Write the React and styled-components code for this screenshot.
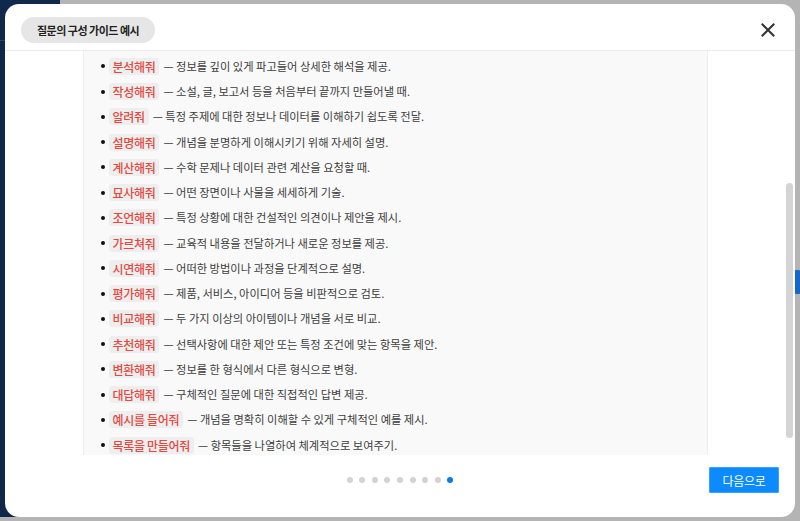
import React, { useLayoutEffect, useRef, useState } from 'react';
import styled, { createGlobalStyle } from 'styled-components';

const GlobalStyle = createGlobalStyle`
  html, body { margin: 0; padding: 0; height: 100%; }
  body {
    font-family: "Noto Sans CJK KR", "Noto Sans", sans-serif;
    background: #b4b4b4;
    overflow: hidden;
  }
  #root { height: 100%; }
`;

const Page = styled.div`
  position: relative;
  height: 100vh;
  box-sizing: border-box;
  padding: 4px 5px;
  display: flex;
`;

const SideBar = styled.div`
  position: absolute;
  left: 0;
  top: 0;
  width: 60px;
  height: calc(100% - 4px);
  background: #10294a;
`;

const SideBarTop = styled.div`
  height: 40px;
  border-bottom: 1px solid #2e4566;
`;

const FloatingBubble = styled.div`
  position: absolute;
  right: -9px;
  top: 270px;
  width: 24px;
  height: 24px;
  border-radius: 50%;
  background: #1767c9;
`;

const Modal = styled.div`
  position: relative;
  z-index: 1;
  flex: 1;
  display: flex;
  flex-direction: column;
  background: #ffffff;
  border-radius: 14px;
  overflow: hidden;
`;

const Header = styled.div`
  display: flex;
  align-items: center;
  justify-content: space-between;
  padding: 13px 20px 7px 16px;
  border-bottom: 1px solid #ececec;
  flex-shrink: 0;
`;

const TitlePill = styled.div`
  display: inline-flex;
  align-items: center;
  height: 26px;
  padding: 0 16px;
  border-radius: 13px;
  background: #e6e6e6;
  color: #222;
  font-size: 11px;
  line-height: 16px;
  font-weight: 700;
  letter-spacing: -0.5px;
  white-space: nowrap;
`;

const CloseButton = styled.button`
  width: 14px;
  height: 14px;
  padding: 0;
  border: none;
  background: none;
  display: flex;
  cursor: pointer;
`;

const BodyWrap = styled.div`
  flex: 1;
  min-height: 0;
  position: relative;
  display: flex;
`;

const Body = styled.div`
  flex: 1;
  overflow-y: auto;
  padding: 0 10px 8px 0;
  scrollbar-width: none;
  &::-webkit-scrollbar { display: none; }
`;

const ScrollThumb = styled.div`
  position: absolute;
  right: 2px;
  width: 7px;
  border-radius: 4px;
  background: #d4d4d4;
`;

const Panel = styled.div`
  width: 625px;
  box-sizing: border-box;
  margin: 0 auto;
  background: #f9f9f9;
  border-left: 1px solid #ececec;
  border-right: 1px solid #ececec;
  padding: 16px 18px 20px 17px;
`;

const SectionTitle = styled.div`
  height: 20px;
  margin-bottom: 4px;
  font-size: 12px;
  font-weight: 700;
  color: #222;
  line-height: 20px;
`;

const List = styled.ul`
  margin: 0;
  padding: 0;
  list-style: none;
  display: flex;
  flex-direction: column;
  gap: 8.25px;
`;

const Item = styled.li`
  display: flex;
  align-items: center;
  height: 17px;
  gap: 4px;
  font-size: 11.25px;
  color: #3d3d3d;
  white-space: nowrap;

  &::before {
    content: "";
    width: 4px;
    height: 4px;
    border-radius: 50%;
    background: #111;
    flex-shrink: 0;
  }
`;

const Tag = styled.span`
  display: inline-flex;
  align-items: center;
  height: 17px;
  padding: 0 4px;
  border-radius: 3px;
  background: #eeeeee;
  color: #e4493f;
  font-size: 12px;
  font-weight: 500;
  letter-spacing: -0.3px;
`;

const Desc = styled.span`
  line-height: 17px;
`;

const Footer = styled.div`
  display: grid;
  grid-template-columns: 1fr auto 1fr;
  align-items: center;
  padding: 12px 16px 24px;
  flex-shrink: 0;
`;

const Dots = styled.div`
  grid-column: 2;
  display: flex;
  gap: 6.6px;
`;

const Dot = styled.span`
  width: 6px;
  height: 6px;
  border-radius: 50%;
  background: ${(p) => (p.$active ? '#0b7cf0' : '#d3d3d3')};
`;

const NextButton = styled.button`
  grid-column: 3;
  justify-self: end;
  width: 70px;
  height: 26px;
  padding: 0;
  border: 1px solid #3a9fff;
  border-radius: 1px;
  background: #0b8bff;
  color: #fff;
  font-family: inherit;
  font-size: 12px;
  letter-spacing: -0.3px;
  cursor: pointer;
`;

const hiddenItems = [
  ['요약해줘', '긴 글이나 자료의 핵심 내용만 간추려 정리.'],
  ['번역해줘', '한 언어의 내용을 다른 언어로 옮길 때.'],
  ['정리해줘', '흩어진 정보를 일정한 기준으로 묶어 정돈.'],
  ['수정해줘', '문장이나 내용의 오류를 고치고 다듬기.'],
  ['검토해줘', '작성된 내용을 살펴보고 문제점을 확인.'],
  ['추출해줘', '자료에서 필요한 정보만 골라내기.'],
  ['분류해줘', '항목들을 기준에 따라 나누어 정리.'],
];

const items = [
  ['분석해줘', '정보를 깊이 있게 파고들어 상세한 해석을 제공.'],
  ['작성해줘', '소설, 글, 보고서 등을 처음부터 끝까지 만들어낼 때.'],
  ['알려줘', '특정 주제에 대한 정보나 데이터를 이해하기 쉽도록 전달.'],
  ['설명해줘', '개념을 분명하게 이해시키기 위해 자세히 설명.'],
  ['계산해줘', '수학 문제나 데이터 관련 계산을 요청할 때.'],
  ['묘사해줘', '어떤 장면이나 사물을 세세하게 기술.'],
  ['조언해줘', '특정 상황에 대한 건설적인 의견이나 제안을 제시.'],
  ['가르쳐줘', '교육적 내용을 전달하거나 새로운 정보를 제공.'],
  ['시연해줘', '어떠한 방법이나 과정을 단계적으로 설명.'],
  ['평가해줘', '제품, 서비스, 아이디어 등을 비판적으로 검토.'],
  ['비교해줘', '두 가지 이상의 아이템이나 개념을 서로 비교.'],
  ['추천해줘', '선택사항에 대한 제안 또는 특정 조건에 맞는 항목을 제안.'],
  ['변환해줘', '정보를 한 형식에서 다른 형식으로 변형.'],
  ['대답해줘', '구체적인 질문에 대한 직접적인 답변 제공.'],
  ['예시를 들어줘', '개념을 명확히 이해할 수 있게 구체적인 예를 제시.'],
  ['목록을 만들어줘', '항목들을 나열하여 체계적으로 보여주기.'],
];

const CloseIcon = () => (
  <svg width="14" height="14" viewBox="0 0 14 14" fill="none">
    <path d="M1.5 1.5L12.5 12.5M12.5 1.5L1.5 12.5" stroke="#333" strokeWidth="2" strokeLinecap="square" />
  </svg>
);

export default function App() {
  const bodyRef = useRef(null);
  const anchorRef = useRef(null);
  const [thumb, setThumb] = useState({ top: 0, height: 0 });

  const updateThumb = () => {
    const b = bodyRef.current;
    if (!b) return;
    const track = b.clientHeight;
    const ratio = b.clientHeight / b.scrollHeight;
    setThumb({
      top: (b.scrollTop / b.scrollHeight) * track,
      height: ratio >= 1 ? 0 : ratio * track,
    });
  };

  useLayoutEffect(() => {
    const b = bodyRef.current;
    const a = anchorRef.current;
    if (!b || !a) return;
    const offset = a.getBoundingClientRect().top - b.getBoundingClientRect().top + b.scrollTop;
    b.scrollTop = offset - 7;
    updateThumb();
  }, []);

  return (
    <>
      <GlobalStyle />
      <Page>
        <SideBar>
          <SideBarTop />
        </SideBar>
        <FloatingBubble />
        <Modal>
          <Header>
            <TitlePill>질문의 구성 가이드 예시</TitlePill>
            <CloseButton aria-label="닫기">
              <CloseIcon />
            </CloseButton>
          </Header>
          <BodyWrap>
            <Body ref={bodyRef} onScroll={updateThumb}>
              <Panel>
                <SectionTitle>자주 쓰는 지시어</SectionTitle>
                <List>
                  {hiddenItems.map(([tag, desc]) => (
                    <Item key={tag}>
                      <Tag>{tag}</Tag>
                      <Desc>— {desc}</Desc>
                    </Item>
                  ))}
                  {items.map(([tag, desc], i) => (
                    <Item key={tag} ref={i === 0 ? anchorRef : undefined}>
                      <Tag>{tag}</Tag>
                      <Desc>— {desc}</Desc>
                    </Item>
                  ))}
                </List>
              </Panel>
            </Body>
            {thumb.height > 0 && (
              <ScrollThumb style={{ top: thumb.top, height: thumb.height }} />
            )}
          </BodyWrap>
          <Footer>
            <Dots>
              {Array.from({ length: 9 }).map((_, i) => (
                <Dot key={i} $active={i === 8} />
              ))}
            </Dots>
            <NextButton>다음으로</NextButton>
          </Footer>
        </Modal>
      </Page>
    </>
  );
}
